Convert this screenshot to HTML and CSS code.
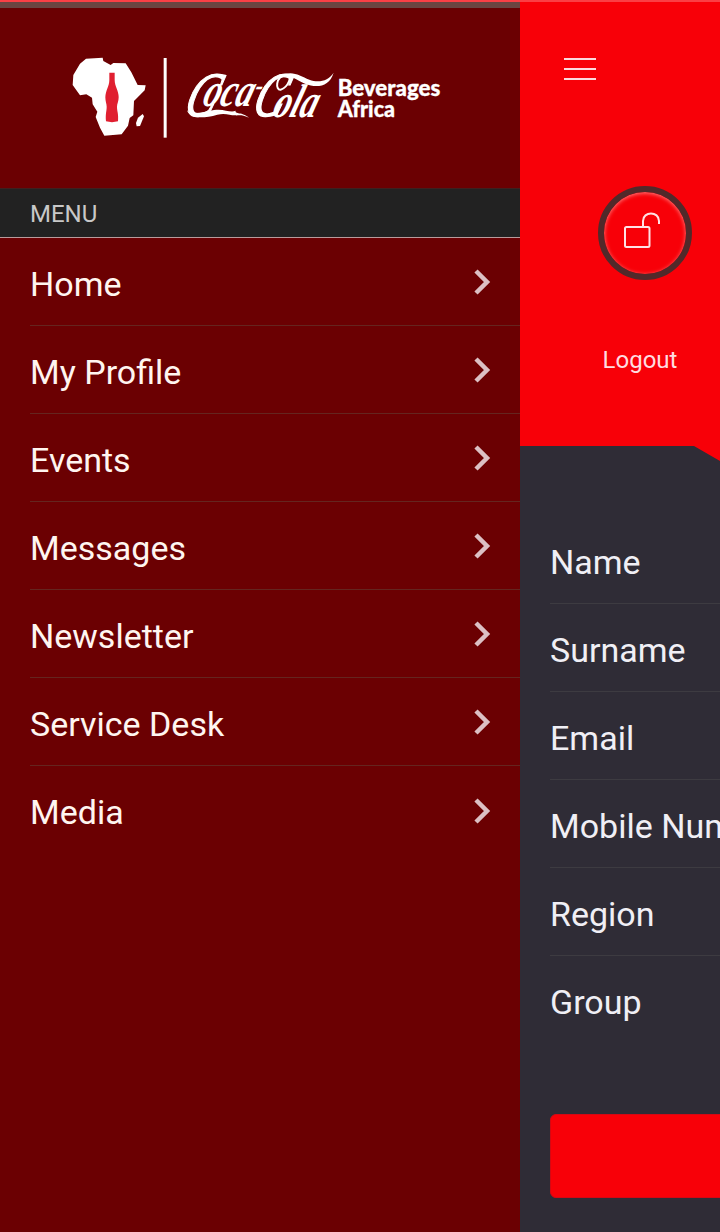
FILE: index.html
```
<!DOCTYPE html>
<html lang="en">
<head>
  <meta charset="UTF-8">
  <title>My Profile</title>
  <link rel="stylesheet" href="styles.css">
</head>
<body>
  <div class="status-line"></div>
  <div class="app">
    <nav class="side-menu">
      <div class="logo">
        <svg width="400" height="105" viewBox="0 0 1200 315">
          <path fill="#fff" d="M78 41L128 38L130 48L152 60L160 54L197 55L214 82L233 120L257 121L254 136L222 168L220 211L209 219L204 242L185 268L133 272L120 248L107 216L112 200L98 178L96 158L79 148L60 151L38 120L40 90L60 56Z"/>
          <path fill="#fff" d="M248 207L252 214L240 243L230 244L228 234L234 218Z"/>
          <path fill="#e01f30" d="M148 83H164V105C164 124 176 137 176 157C176 170 171 176 171 185C171 200 176 204 174 229Q156 234 138 229C136 204 140 200 140 185C140 176 136 170 136 157C136 137 148 124 148 105Z"/>
          <rect fill="#fff" x="311" y="39" width="9" height="239"/>
          <text class="script" transform="translate(366 212) skewX(-18) scale(.72 1)"><tspan class="cap" x="0" y="0">C</tspan><tspan class="low" x="66" y="-29">oca</tspan><tspan class="dash" x="270" y="-62">-</tspan><tspan class="cap" x="284" y="0">C</tspan><tspan class="low" x="372" y="3">ola</tspan></text>
          <path fill="#fff" d="M381 196C397 212 430 200 462 195C493 190 511 205 527 197C523 208 548 200 567 218C543 207 536 212 526 211C513 212 497 203 472 209C430 221 389 222 381 196Z"/>
          <path fill="none" stroke="#fff" stroke-width="6" d="M676 91C646 96 646 136 662 134C682 130 704 86 676 91"/>
          <path fill="#fff" d="M664 92C696 74 719 92 748 104C778 116 805 106 821 83C808 126 770 130 735 116C704 102 686 86 664 92Z"/>
          <g class="division">
            <text x="833" y="152" textLength="308" lengthAdjust="spacingAndGlyphs">Beverages</text>
            <text x="833" y="215" textLength="172" lengthAdjust="spacingAndGlyphs">Africa</text>
          </g>
        </svg>
      </div>
      <div class="menu-title">MENU</div>
      <ul class="menu-list">
        <li>Home <svg class="arrow" viewBox="0 0 18 26"><path d="M3 2L14 13L3 24"/></svg></li>
        <li>My Profile <svg class="arrow" viewBox="0 0 18 26"><path d="M3 2L14 13L3 24"/></svg></li>
        <li>Events <svg class="arrow" viewBox="0 0 18 26"><path d="M3 2L14 13L3 24"/></svg></li>
        <li>Messages <svg class="arrow" viewBox="0 0 18 26"><path d="M3 2L14 13L3 24"/></svg></li>
        <li>Newsletter <svg class="arrow" viewBox="0 0 18 26"><path d="M3 2L14 13L3 24"/></svg></li>
        <li>Service Desk <svg class="arrow" viewBox="0 0 18 26"><path d="M3 2L14 13L3 24"/></svg></li>
        <li>Media <svg class="arrow" viewBox="0 0 18 26"><path d="M3 2L14 13L3 24"/></svg></li>
      </ul>
    </nav>
    <main class="page">
      <div class="page-top">
        <div class="hamburger"><span></span><span></span><span></span></div>
        <div class="logout">
          <div class="lock">
            <svg width="40" height="40" viewBox="0 0 40 40">
              <rect x="3" y="16" width="24.500" height="20" rx="1.500"/>
              <path d="M21 16V10C21 0 37 0 37 10V13"/>
            </svg>
          </div>
          <div class="logout-label">Logout</div>
        </div>
      </div>
      <div class="page-body">
        <ul class="fields">
          <li>Name</li>
          <li>Surname</li>
          <li>Email</li>
          <li>Mobile Number</li>
          <li>Region</li>
          <li>Group</li>
        </ul>
        <div class="save-btn"></div>
      </div>
    </main>
  </div>
</body>
</html>
```

FILE: styles.css
```
* { box-sizing: border-box; }
body { margin: 0; width: 720px; height: 1232px; overflow: hidden; font-family: Roboto, sans-serif; background: #6b0002; }
ul { list-style: none; margin: 0; padding: 0; }
.status-line { height: 2px; background: #fb3f45; }
.app { display: flex; height: 1230px; }

.side-menu { width: 520px; flex: none; background: #6b0002; border-top: 6px solid #6b4541; }
.logo { height: 180px; padding: 37px 0 0 60px; }
.logo svg { display: block; }
.script { font-family: "Liberation Serif", serif; font-style: italic; font-weight: bold; fill: #fff; }
.script .cap { font-size: 190px; font-weight: normal; stroke: #fff; stroke-width: 4; }
.script .low { font-size: 142px; }
.script .dash { font-size: 90px; }
.division { font-family: Lato, sans-serif; font-weight: 900; font-size: 67px; fill: #fff; stroke: #fff; stroke-width: 1; }
.menu-title { height: 50px; padding-left: 30px; background: #222; border-top: 1px solid #40201f; border-bottom: 1px solid #b99c9c; color: #c8c8c8; font-size: 24px; line-height: 50px; }
.menu-list li { display: flex; justify-content: space-between; align-items: center; height: 88px; margin-left: 30px; padding: 4px 29px 0 0; border-bottom: 1px solid #65251f; color: #fff5f0; font-size: 34px; }
.menu-list li:last-child { border-bottom: none; }
.arrow { width: 18px; height: 26px; margin-top: -3px; fill: none; stroke: #dcc0c4; stroke-width: 4.500; }

.page { flex: 1; overflow: hidden; background: #2f2c36; }
.page-top { height: 459px; padding: 56px 0 0 44px; background: #f80008; clip-path: polygon(0 0, 100% 0, 100% 100%, 174px 444px, 0 444px); }
.hamburger { display: flex; flex-direction: column; gap: 8px; width: 32px; }
.hamburger span { height: 2px; background: #fbd9dd; }
.logout { display: flex; flex-direction: column; align-items: center; width: 152px; padding-top: 106px; }
.lock { width: 94px; height: 94px; margin-left: 10px; padding: 19px 0 0 18px; border: 6px solid #51292a; border-radius: 50%; box-shadow: inset 0 1px 4px 0 #ff8585; }
.lock svg { display: block; fill: none; stroke: #ffe0e4; stroke-width: 2; }
.logout-label { margin-top: 66px; color: #ffdce0; font-size: 24px; line-height: 28px; }

.page-body { padding: 55px 0 0 30px; }
.fields li { height: 88px; padding-top: 4px; border-bottom: 1px solid #3d3b41; color: #f0eff5; font-size: 34px; line-height: 84px; white-space: nowrap; }
.fields li:last-child { border-bottom: none; }
.save-btn { height: 84px; margin-top: 70px; margin-right: -10px; background: #f80008; border: 1px solid #d50813; border-radius: 6px; }
```
